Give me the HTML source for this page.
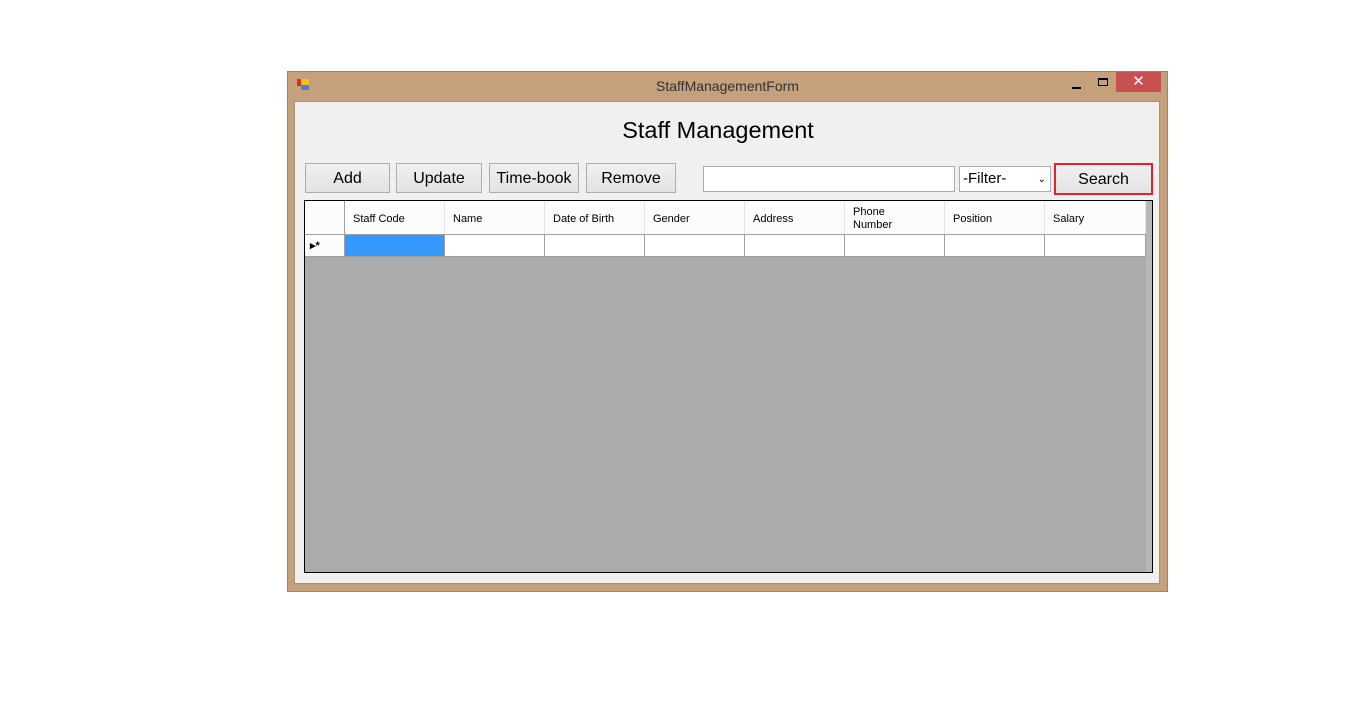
<!DOCTYPE html>
<html><head><style>
body{margin:0;width:1360px;height:720px;background:#fff;position:relative;font-family:"Liberation Sans",sans-serif;overflow:hidden}
.a{position:absolute;box-sizing:border-box}
.btn{background:linear-gradient(#f0f0f0,#e3e3e3);border:1px solid #adadad;font-size:16px;text-align:center;line-height:29px;color:#000}
.hd{font-size:11px;color:#000;top:0;height:33px;border-right:1px solid #e5e5e5;padding-left:8px;padding-top:3px;display:flex;align-items:center;line-height:13px}
.cell{top:34px;height:22px;background:#fff;border-right:1px solid #a0a0a0;border-bottom:1px solid #a0a0a0}
</style></head><body>
<div class="a" style="left:287px;top:71px;width:881px;height:521px;background:#c4a17b;border:1px solid #a08460"></div>
<div class="a" style="left:297px;top:79px;width:7px;height:7px;background:#d03030"></div>
<div class="a" style="left:301px;top:79px;width:8px;height:6px;background:#f0c020"></div>
<div class="a" style="left:301px;top:85px;width:8px;height:5px;background:#4a80d0"></div>
<div class="a" style="left:287px;top:78px;width:881px;text-align:center;font-size:14px;color:#333">StaffManagementForm</div>
<div class="a" style="left:1072px;top:87px;width:9px;height:2px;background:#000"></div>
<div class="a" style="left:1098px;top:78px;width:10px;height:8px;border:1px solid #000;border-top-width:2px"></div>
<div class="a" style="left:1116px;top:72px;width:45px;height:20px;background:#c75050;color:#fff;text-align:center;font-size:15px;line-height:20px">✕</div>
<div class="a" style="left:294px;top:101px;width:866px;height:483px;background:#f0f0f0;border:1px solid #b09070"></div>
<div class="a" style="left:294px;top:117px;width:848px;text-align:center;font-size:23.5px;color:#000">Staff Management</div>
<div class="a btn" style="left:305px;top:163px;width:85px;height:30px">Add</div>
<div class="a btn" style="left:396px;top:163px;width:86px;height:30px">Update</div>
<div class="a btn" style="left:489px;top:163px;width:90px;height:30px">Time-book</div>
<div class="a btn" style="left:586px;top:163px;width:90px;height:30px">Remove</div>
<div class="a" style="left:703px;top:166px;width:252px;height:26px;background:#fff;border:1px solid #abadb3"></div>
<div class="a" style="left:959px;top:166px;width:92px;height:26px;background:#fff;border:1px solid #abadb3;font-size:15px;line-height:24px;padding-left:3px">-Filter-<span style="position:absolute;right:4px;top:1px;font-size:10px">&#8964;</span></div>
<div class="a btn" style="left:1054px;top:163px;width:99px;height:32px;border:2px solid #e8202a;line-height:29px">Search</div>
<div class="a" style="left:304px;top:200px;width:849px;height:373px;background:#ababab;border:1px solid #000">
 <div class="a" style="left:0;top:0;width:841px;height:34px;background:#fcfcfc;border-bottom:1px solid #a0a0a0"></div>
 <div class="a" style="left:841px;top:0;width:6px;height:371px;background:#b8b8b8"></div>
 <div class="a" style="left:0;top:0;width:40px;height:34px;border-right:1px solid #a0a0a0"></div>
 <div class="a hd" style="left:40px;width:100px">Staff Code</div>
 <div class="a hd" style="left:140px;width:100px">Name</div>
 <div class="a hd" style="left:240px;width:100px">Date of Birth</div>
 <div class="a hd" style="left:340px;width:100px">Gender</div>
 <div class="a hd" style="left:440px;width:100px">Address</div>
 <div class="a hd" style="left:540px;width:100px">Phone<br>Number</div>
 <div class="a hd" style="left:640px;width:100px">Position</div>
 <div class="a hd" style="left:740px;width:101px">Salary</div>
 <div class="a cell" style="left:0;width:40px;background:#fcfcfc;font-size:11px;padding-left:5px;line-height:22px;font-weight:bold">▸*</div>
 <div class="a cell" style="left:40px;width:100px;background:#3399ff"></div>
 <div class="a cell" style="left:140px;width:100px"></div>
 <div class="a cell" style="left:240px;width:100px"></div>
 <div class="a cell" style="left:340px;width:100px"></div>
 <div class="a cell" style="left:440px;width:100px"></div>
 <div class="a cell" style="left:540px;width:100px"></div>
 <div class="a cell" style="left:640px;width:100px"></div>
 <div class="a cell" style="left:740px;width:101px"></div>
</div>
</body></html>
